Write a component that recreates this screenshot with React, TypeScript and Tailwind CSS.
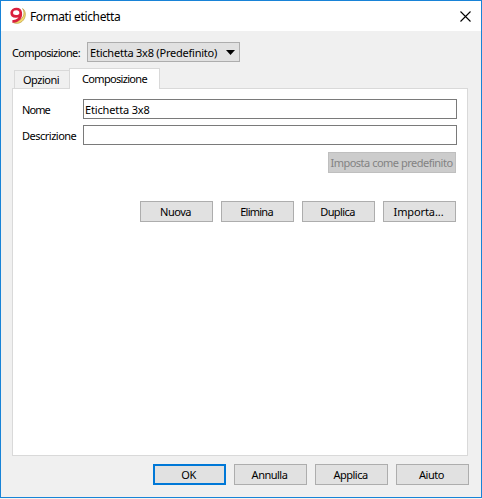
import type { ReactNode } from 'react';

function Label({ children, className = '' }: { children: ReactNode; className?: string }) {
  return <span className={`block whitespace-nowrap ${className}`}>{children}</span>;
}

function Button({ children, className = 'border border-[#adadad] bg-[#e1e1e1]', text = 'tracking-[-0.5px]' }: { children: ReactNode; className?: string; text?: string }) {
  return (
    <button className={`flex h-[21px] w-[73px] items-center justify-center pr-[2px] ${className}`}>
      <Label className={text}>{children}</Label>
    </button>
  );
}

function Logo() {
  return (
    <svg width="17" height="18" viewBox="0 0 17 18" fill="none">
      <path d="M12.6 1.6C16 7 13 13.6 3.8 15.8C9.5 18 16 13.4 15.3 6.2C15 4.2 14 2.4 12.6 1.6Z" fill="#f5db6e" stroke="#b99a48" strokeWidth=".7" />
      <path d="M10.7 6C10.7 3.2 8.8 2 6.5 2S1.7 3.4 1.7 5.8s1.8 3.6 4.2 3.6S10.7 8.2 10.7 6Zm0 0C11.3 10.6 8.6 14 2.4 14.6" stroke="#da1f3d" strokeWidth="2.7" />
    </svg>
  );
}

export default function App() {
  return (
    <div className="h-[499px] w-[482px] bg-[#f8f4ef] font-['Noto_Sans',sans-serif] text-[11px] leading-[15px] text-black">
      <div className="flex h-[498px] flex-col border border-[#1883d7] bg-[#f0f0f0]">
        <header className="flex h-[30px] shrink-0 items-center bg-white pl-[9px] pr-2.5">
          <Logo />
          <Label className="ml-[3px] text-[12px] tracking-[-0.36px]">Formati etichetta</Label>
          <svg className="ml-auto" width="11" height="11" viewBox="0 0 11 11" stroke="#000" strokeWidth="1.1">
            <path d="M.5.5l10 10M10.5.5l-10 10" />
          </svg>
        </header>
        <div className="mt-[11px] flex h-5 shrink-0 items-center pl-[11px]">
          <Label className="w-[75px] tracking-[-0.62px]">Composizione:</Label>
          <div className="flex h-5 w-[153px] items-center border border-[#adadad] bg-[#e1e1e1] pl-[2px] pr-1">
            <Label className="tracking-[-0.22px]">Etichetta 3x8 (Predefinito)</Label>
            <svg className="ml-auto" width="9" height="5" viewBox="0 0 9 5">
              <path d="M0 0h9L4.5 5Z" />
            </svg>
          </div>
        </div>
        <div className="mt-1.5 flex h-[21px] shrink-0 items-end pl-[13px]">
          <div className="mb-px flex h-[18px] w-[55px] items-center justify-center border border-r-0 border-b-0 border-[#d9d9d9] pr-[2px]">
            <Label className="tracking-[-0.5px]">Opzioni</Label>
          </div>
          <div className="z-10 flex h-[21px] w-[91px] justify-center border border-b-0 border-[#d9d9d9] bg-white pt-[2px]">
            <Label className="tracking-[-0.68px]">Composizione</Label>
          </div>
        </div>
        <main className="-mt-px ml-[11px] flex h-[368px] w-[456px] shrink-0 flex-col border border-[#d9d9d9] bg-white pl-[9px] pr-[10px] pt-2.5">
          <div className="flex h-5 items-center">
            <Label className="w-[61px] tracking-[-0.9px]">Nome</Label>
            <div className="flex h-5 w-[374px] shrink-0 items-center border border-[#7a7a7a] pl-[1px]">
              <Label className="tracking-[-0.15px]">Etichetta 3x8</Label>
            </div>
          </div>
          <div className="mt-1.5 flex h-5 items-center">
            <Label className="w-[61px] tracking-[-0.5px]">Descrizione</Label>
            <div className="h-5 w-[374px] shrink-0 border border-[#7a7a7a]" />
          </div>
          <div className="mt-[7px] flex justify-end pr-px">
            <div className="flex h-[21px] w-32 items-center justify-center border border-[#bfbfbf] bg-[#cccccc] pr-px text-[#838383]">
              <Label className="tracking-[-0.5px]">Imposta come predefinito</Label>
            </div>
          </div>
          <div className="mt-7 flex justify-end gap-2 pr-px">
            <Button>Nuova</Button>
            <Button text="tracking-[-0.75px]">Elimina</Button>
            <Button text="tracking-[-0.6px]">Duplica</Button>
            <Button text="tracking-[-0.1px]">Importa...</Button>
          </div>
        </main>
        <footer className="mt-2 flex justify-end gap-2 pr-3">
          <Button className="border-2 border-[#0078d7] bg-[#e1e1e1]">OK</Button>
          <Button>Annulla</Button>
          <Button>Applica</Button>
          <Button>Aiuto</Button>
        </footer>
      </div>
    </div>
  );
}
